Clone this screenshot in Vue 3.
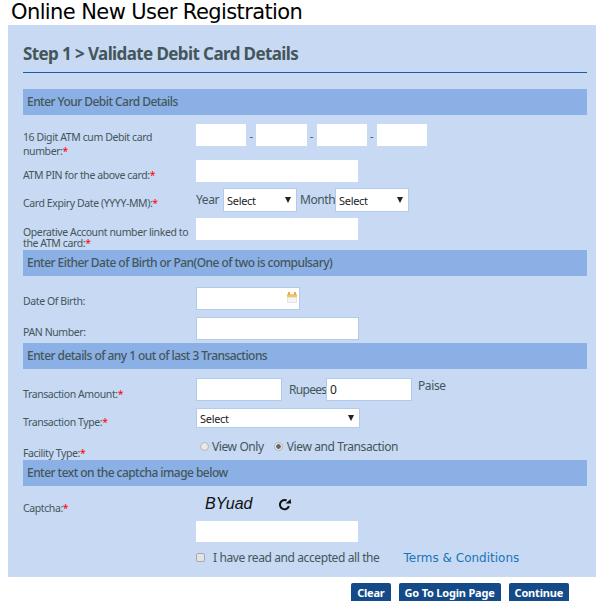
<script setup>
const cardParts = [0, 1, 2, 3]
</script>

<template>
  <div class="page">
    <h1 class="title">Online New User Registration</h1>
    <form class="panel" @submit.prevent>
      <h2 class="step">Step 1 &gt; Validate Debit Card Details</h2>

      <h3 class="bar first">Enter Your Debit Card Details</h3>
      <div class="row r-card">
        <label class="lbl">16 Digit ATM cum Debit card number:<b>*</b></label>
        <div class="ctl card-parts">
          <template v-for="i in cardParts" :key="i">
            <input class="plain part" type="text" />
            <span v-if="i < 3" class="dash">-</span>
          </template>
        </div>
      </div>
      <div class="row r-pin">
        <label class="lbl">ATM PIN for the above card:<b>*</b></label>
        <div class="ctl"><input class="plain wide" type="password" /></div>
      </div>
      <div class="row r-exp">
        <label class="lbl">Card Expiry Date (YYYY-MM):<b>*</b></label>
        <div class="ctl inline">
          <span class="word year">Year</span>
          <span class="sel small"><select><option>Select</option></select></span>
          <span class="word month">Month</span>
          <span class="sel small"><select><option>Select</option></select></span>
        </div>
      </div>
      <div class="row r-acc">
        <label class="lbl tight">Operative Account number linked to the ATM card:<b>*</b></label>
        <div class="ctl"><input class="plain wide" type="text" /></div>
      </div>

      <h3 class="bar">Enter Either Date of Birth or Pan(One of two is compulsary)</h3>
      <div class="row r-dob">
        <label class="lbl">Date Of Birth:</label>
        <div class="ctl date">
          <input class="boxed dob" type="text" />
          <svg class="cal" width="10" height="11" viewBox="0 0 10 11">
            <rect x="0" y="2" width="10" height="9" fill="#e4e4e4" />
            <rect x="0" y="2" width="10" height="3" fill="#f3c468" />
            <rect x="1" y="0" width="2" height="3" fill="#e9ac4a" />
            <rect x="7" y="0" width="2" height="3" fill="#e9ac4a" />
            <rect x="1" y="6" width="8" height="4" fill="#f4f4f4" />
          </svg>
        </div>
      </div>
      <div class="row r-pan">
        <label class="lbl">PAN Number:</label>
        <div class="ctl"><input class="boxed wide" type="text" /></div>
      </div>

      <h3 class="bar">Enter details of any 1 out of last 3 Transactions</h3>
      <div class="row r-amt">
        <label class="lbl">Transaction Amount:<b>*</b></label>
        <div class="ctl inline amt">
          <input class="boxed rupees" type="text" />
          <span class="word rs">Rupees</span>
          <input class="boxed paise" type="text" value="0" />
          <span class="word ps">Paise</span>
        </div>
      </div>
      <div class="row r-type">
        <label class="lbl">Transaction Type:<b>*</b></label>
        <div class="ctl"><span class="sel big"><select><option>Select</option></select></span></div>
      </div>
      <div class="row r-fac">
        <label class="lbl">Facility Type:<b>*</b></label>
        <div class="ctl inline radios">
          <span class="radio"></span><span class="word">View Only</span>
          <span class="radio on"></span><span class="word">View and Transaction</span>
        </div>
      </div>

      <h3 class="bar">Enter text on the captcha image below</h3>
      <div class="row r-cap">
        <label class="lbl">Captcha:<b>*</b></label>
        <div class="ctl">
          <div class="cap-line">
            <span class="captcha">BYuad</span>
            <svg class="refresh" width="14" height="13" viewBox="0 0 14 13">
              <path d="M10.9 8.2A4.6 4.6 0 1 1 8.6 2.5" fill="none" stroke="#111" stroke-width="2" />
              <path d="M7.6 5.6h5.6L12.6 1z" fill="#111" />
            </svg>
          </div>
          <input class="plain wide cap-input" type="text" />
          <div class="terms">
            <span class="check"></span>
            <span class="word">I have read and accepted all the</span>
            <a class="link" href="#">Terms &amp; Conditions</a>
          </div>
        </div>
      </div>
    </form>
    <div class="actions">
      <button class="btn" type="button">Clear</button>
      <button class="btn" type="button">Go To Login Page</button>
      <button class="btn" type="button">Continue</button>
    </div>
  </div>
</template>

<style scoped>
.page {
  width: 596px;
  height: 601px;
  overflow: hidden;
  background: #fff;
  font-family: "Noto Sans", sans-serif;
  color: #44565a;
}
.title {
  margin: 0;
  height: 25px;
  padding-left: 11px;
  font-family: "DejaVu Sans", sans-serif;
  font-size: 21px;
  line-height: 25px;
  letter-spacing: -0.6px;
  font-weight: 400;
  color: #000;
  white-space: nowrap;
}
.panel {
  margin-left: 8px;
  width: 588px;
  height: 552px;
  padding: 0 9px 0 15px;
  box-sizing: border-box;
  background: #c7d9f3;
}
.step {
  margin: 0;
  height: 48px;
  box-sizing: border-box;
  padding-top: 18px;
  border-bottom: 1px solid #1b5aa0;
  font-size: 17px;
  line-height: 22px;
  font-weight: 700;
  letter-spacing: -0.6px;
  color: #44565a;
  white-space: nowrap;
}
.bar {
  margin: 0;
  height: 26px;
  padding-left: 4px;
  background: #8bb0e6;
  font-size: 12px;
  line-height: 25px;
  font-weight: 500;
  letter-spacing: -0.55px;
  color: #44565a;
}
.bar.first { margin-top: 16px; }
.row {
  display: grid;
  grid-template-columns: 173px 1fr;
  box-sizing: border-box;
}
.lbl {
  font-size: 10.5px;
  line-height: 14px;
  letter-spacing: -0.4px;
  color: #44565a;
}
.lbl b { color: #f00; font-weight: 400; }
.lbl.tight { line-height: 11px; }
.ctl { min-width: 0; }
.inline { display: flex; align-items: center; }
input, select {
  box-sizing: border-box;
  margin: 0;
  background: #fff;
  border-radius: 0;
  outline: none;
  font-family: "Noto Sans", sans-serif;
  font-size: 11px;
  letter-spacing: -0.3px;
  color: #222;
}
.plain { height: 22px; border: 0; display: block; }
.boxed { border: 1px solid #b0cbec; display: block; }
.wide { width: 162px; }
.part { width: 50.3px; }
.card-parts { display: flex; align-items: flex-start; gap: 3px; }
.dash { width: 4px; font-size: 11px; line-height: 24px; text-align: center; }
.word { font-size: 12px; line-height: 15px; letter-spacing: -0.4px; white-space: nowrap; }
.sel { position: relative; display: block; }
.sel select {
  appearance: none;
  -webkit-appearance: none;
  width: 100%;
  height: 100%;
  border: 1px solid #b0cbec;
  padding: 0 0 0 3px;
  display: block;
}
.sel::after {
  content: "";
  position: absolute;
  right: 6px;
  top: 50%;
  margin-top: -3px;
  border-left: 3px solid transparent;
  border-right: 3px solid transparent;
  border-top: 6px solid #222;
  pointer-events: none;
}
.small { width: 74px; height: 24px; }
.big { width: 164px; height: 20px; }

.r-card { height: 38px; padding-top: 9px; }
.r-card .lbl { padding-top: 6px; }
.r-pin { height: 31px; padding-top: 7px; }
.r-pin .lbl { padding-top: 8px; }
.r-exp { height: 34px; padding-top: 4px; }
.r-exp .lbl { padding-top: 8px; }
.r-exp .inline { align-items: flex-start; }
.r-exp .word { padding-top: 4px; }
.year { width: 27px; }
.month { width: 38px; padding-left: 3px; box-sizing: border-box; }
.r-acc { height: 32px; }
.r-acc .lbl { padding-top: 9px; }
.r-dob { height: 41px; padding-top: 11px; }
.r-dob .lbl { padding-top: 7px; }
.date { position: relative; width: 104px; }
.dob { width: 104px; height: 23px; }
.cal { position: absolute; right: 3px; top: 5px; }
.r-pan { height: 26px; }
.r-pan .lbl { padding-top: 8px; }
.r-pan .boxed { height: 23px; width: 163px; }
.r-amt { height: 39px; padding-top: 9px; }
.r-amt .lbl { padding-top: 9px; }
.amt { align-items: flex-start; }
.rupees { width: 86px; height: 23px; }
.word.rs { margin-left: 7px; padding-top: 4px; width: 37px; letter-spacing: -0.7px; }
.paise { width: 86px; height: 23px; padding-left: 3px; font-size: 12px; }
.ps { margin-left: 6px; }
.r-type { height: 30px; }
.r-type .lbl { padding-top: 7px; }
.r-fac { height: 22px; }
.r-fac .lbl { padding-top: 8px; }
.radios { padding-left: 4px; height: 16px; }
.radio {
  width: 9px;
  height: 9px;
  box-sizing: border-box;
  border: 1px solid #b5b5b5;
  border-radius: 50%;
  background: #e8e8e8;
  margin-right: 3px;
}
.radio.on {
  background: radial-gradient(circle, #666 0 2px, #e8e8e8 2.5px);
  margin-left: 10px;
  margin-right: 4px;
}
.r-cap { height: 91px; padding-top: 8px; }
.r-cap .lbl { padding-top: 7px; }
.cap-line { display: flex; align-items: flex-start; height: 27px; padding-left: 9px; }
.captcha {
  width: 73px;
  font-family: "Liberation Sans", sans-serif;
  font-style: italic;
  font-size: 16px;
  line-height: 20px;
  color: #111;
}
.refresh { margin-top: 4px; }
.cap-input { height: 21px; }
.terms { display: flex; align-items: center; margin-top: 8px; height: 14px; white-space: nowrap; }
.check {
  width: 9px;
  height: 9px;
  box-sizing: border-box;
  border: 1px solid #aaa;
  border-radius: 2px;
  background: #e3e3e3;
  margin-right: 8px;
}
.link { margin-left: 24px; padding-top: 2px; font-family: "DejaVu Sans", sans-serif; font-size: 12px; color: #1a75b8; text-decoration: none; }
.actions {
  display: flex;
  justify-content: flex-end;
  gap: 8px;
  padding: 6px 27px 0 0;
}
.btn {
  height: 20px;
  padding: 0 6px 2px;
  border: 0;
  border-radius: 2px 2px 0 0;
  background: #134a87;
  color: #fff;
  font-family: "Noto Sans", sans-serif;
  font-size: 11px;
  font-weight: 700;
  letter-spacing: -0.2px;
}
</style>
